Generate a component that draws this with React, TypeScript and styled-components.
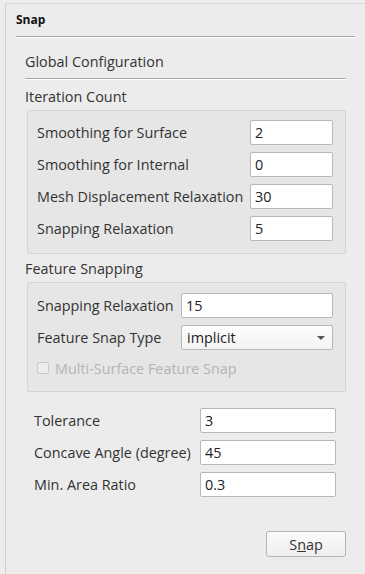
import React, { FC } from "react";
import styled, { createGlobalStyle } from "styled-components";

const GlobalStyle = createGlobalStyle`
  html, body {
    margin: 0;
    padding: 0;
    background: #ececec;
  }
  body {
    font-family: "Open Sans", "Liberation Sans", sans-serif;
    font-size: 14.4px;
    color: #333333;
  }
`;

const Frame = styled("div")`
  margin: 3px 0 0 5px;
  height: 571px;
  box-sizing: border-box;
  border-top: 1px solid #d9d9d9;
  border-left: 1px solid #d0d0d0;
  padding: 0 10px;
`;

const Title = styled("div")`
  font-weight: 700;
  font-size: 12px;
  color: #111;
  height: 32px;
  line-height: 32px;
`;

const Separator = styled("div")`
  height: 1px;
  background: #a8a8a8;
  border-bottom: 1px solid #ffffff;
`;

const Body = styled("div")`
  padding-left: 9px;
  margin-right: 9px;
`;

const Heading = styled("div")`
  box-sizing: border-box;
  height: 40px;
  padding-top: 14px;
  line-height: 20px;
`;

const SubHeading = styled("div")<{ top: number; height: number }>`
  box-sizing: border-box;
  height: ${(p) => p.height}px;
  padding-top: ${(p) => p.top}px;
  line-height: 20px;
`;

const Group = styled("div")<{ top: number }>`
  margin-left: 2px;
  border: 1px solid #d4d4d4;
  border-radius: 2px;
  background: #e6e6e6;
  padding: ${(p) => p.top}px 12px 12px 9px;
  display: flex;
  flex-direction: column;
  gap: 7px;
`;

const Row = styled("div")<{ labelWidth: number }>`
  display: grid;
  grid-template-columns: ${(p) => p.labelWidth}px 1fr;
  align-items: center;
  height: 25px;
`;

const Label = styled("span")<{ disabled?: boolean }>`
  white-space: nowrap;
  color: ${(p) => (p.disabled ? "#b4b4b4" : "#333")};
`;

const Field = styled("div")`
  height: 25px;
  box-sizing: border-box;
  border: 1px solid #b8b8b8;
  border-radius: 2px;
  background: #ffffff;
  padding: 0 4px;
  line-height: 23px;
  color: #222;
`;

const Combo = styled(Field)`
  display: flex;
  align-items: center;
  justify-content: space-between;
  background: linear-gradient(#fdfdfd, #f3f3f3);
  padding: 0 7px 0 5px;
`;

const Arrow = styled("span")`
  width: 0;
  height: 0;
  border-left: 4px solid transparent;
  border-right: 4px solid transparent;
  border-top: 4px solid #555;
`;

const CheckRow = styled("div")`
  display: flex;
  align-items: center;
  gap: 6px;
  height: 22px;
`;

const CheckBox = styled("span")`
  width: 12px;
  height: 12px;
  box-sizing: border-box;
  border: 1px solid #c8c8c8;
  border-radius: 2px;
  background: #ececec;
`;

const Plain = styled("div")`
  padding: 16px 10px 0 9px;
  display: flex;
  flex-direction: column;
  gap: 7px;
`;

const Footer = styled("div")`
  display: flex;
  justify-content: flex-end;
  padding-top: 34px;
`;

const Button = styled("button")`
  width: 80px;
  height: 26px;
  box-sizing: border-box;
  border: 1px solid #b4b4b4;
  border-radius: 3px;
  background: linear-gradient(#fbfbfb, #efefef);
  font-family: inherit;
  font-size: 14.4px;
  color: #333;
  padding: 0;
`;

const iteration = [
  { label: "Smoothing for Surface", value: "2" },
  { label: "Smoothing for Internal", value: "0" },
  { label: "Mesh Displacement Relaxation", value: "30" },
  { label: "Snapping Relaxation", value: "5" },
];

const global = [
  { label: "Tolerance", value: "3" },
  { label: "Concave Angle (degree)", value: "45" },
  { label: "Min. Area Ratio", value: "0.3" },
];

const App: FC = () => {
  return (
    <>
      <GlobalStyle />
      <Frame>
        <Title>Snap</Title>
        <Separator />
        <Body>
          <Heading>Global Configuration</Heading>
          <Separator />
          <SubHeading top={7} height={30}>
            Iteration Count
          </SubHeading>
          <Group top={9}>
            {iteration.map((r) => (
              <Row key={r.label} labelWidth={213}>
                <Label>{r.label}</Label>
                <Field>{r.value}</Field>
              </Row>
            ))}
          </Group>
          <SubHeading top={5} height={28}>
            Feature Snapping
          </SubHeading>
          <Group top={10}>
            <Row labelWidth={144}>
              <Label>Snapping Relaxation</Label>
              <Field>15</Field>
            </Row>
            <Row labelWidth={144}>
              <Label>Feature Snap Type</Label>
              <Combo>
                implicit
                <Arrow />
              </Combo>
            </Row>
            <CheckRow>
              <CheckBox />
              <Label disabled>Multi-Surface Feature Snap</Label>
            </CheckRow>
          </Group>
          <Plain>
            {global.map((r) => (
              <Row key={r.label} labelWidth={166}>
                <Label>{r.label}</Label>
                <Field>{r.value}</Field>
              </Row>
            ))}
          </Plain>
          <Footer>
            <Button>
              S<u>n</u>ap
            </Button>
          </Footer>
        </Body>
      </Frame>
    </>
  );
};

export default App;
